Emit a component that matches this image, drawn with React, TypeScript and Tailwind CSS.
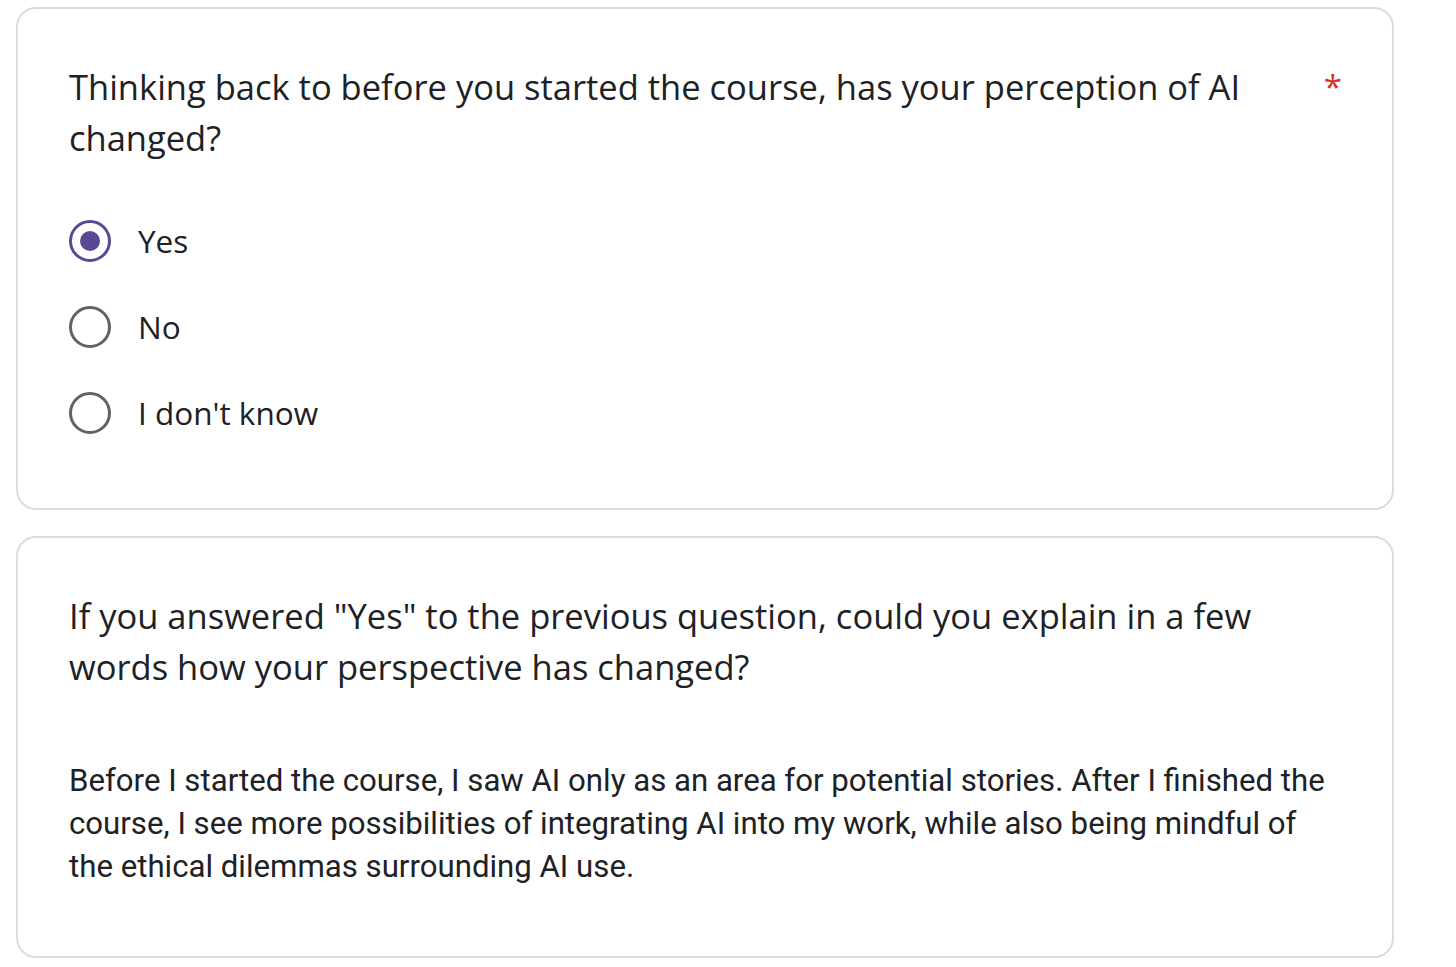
const options = ['Yes', 'No', "I don't know"]

function Radio({ checked }: { checked: boolean }) {
  return checked ? (
    <span className="flex h-[42px] w-[42px] shrink-0 items-center justify-center rounded-full border-[3px] border-[#5a4897]">
      <span className="h-[20px] w-[20px] rounded-full bg-[#5a4897]" />
    </span>
  ) : (
    <span className="h-[42px] w-[42px] shrink-0 rounded-full border-[3px] border-[#5f6368]" />
  )
}

export default function App() {
  return (
    <div className="min-h-screen bg-white pl-4 pt-[7px] text-[#202124]">
      {/* question 1 */}
      <div className="flex h-[503px] w-[1378px] flex-col rounded-[20px] border-2 border-[#dadce0] pl-[51px] pr-[50px] pt-[52px]">
        <div className="flex justify-between">
          <h2 className="w-[1200px] font-['Open_Sans',sans-serif] text-[34.5px] leading-[51px]">
            Thinking back to before you started the course, has your perception of AI changed?
          </h2>
          <span className="font-['Open_Sans',sans-serif] text-[33px] leading-[51px] text-[#d93025]">*</span>
        </div>
        <div className="mt-[57px] flex flex-col gap-[44px]">
          {options.map((o, i) => (
            <label key={o} className="flex items-center gap-[27px]">
              <Radio checked={i === 0} />
              <span className="font-['Open_Sans',sans-serif] text-[31.5px] leading-[42px]">{o}</span>
            </label>
          ))}
        </div>
      </div>

      {/* question 2 */}
      <div className="mt-[26px] flex h-[422px] w-[1378px] flex-col rounded-[20px] border-2 border-[#dadce0] pl-[51px] pr-[50px] pt-[52px]">
        <h2 className="w-[1240px] font-['Open_Sans',sans-serif] text-[34.5px] leading-[51px]">
          If you answered "Yes" to the previous question, could you explain in a few words how your perspective has changed?
        </h2>
        <p className="mt-[67px] w-[1270px] font-['Roboto',sans-serif] text-[31.2px] leading-[43px]">
          Before I started the course, I saw AI only as an area for potential stories. After I finished the course, I see more possibilities of integrating AI into my work, while also being mindful of the ethical dilemmas surrounding AI use.
        </p>
      </div>
    </div>
  )
}
